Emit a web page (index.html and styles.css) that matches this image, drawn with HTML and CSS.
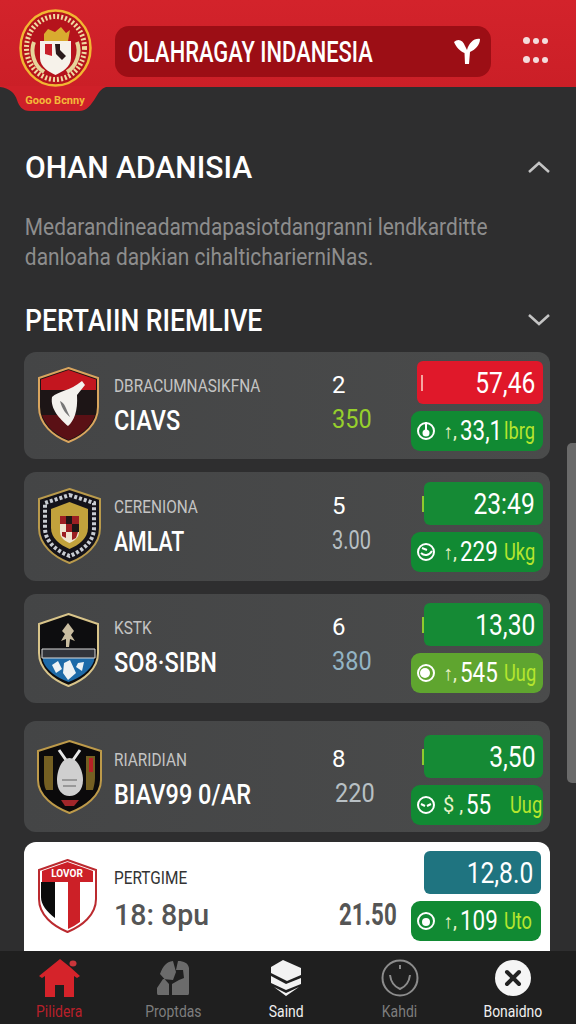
FILE: index.html
```html
<!DOCTYPE html>
<html lang="id">
<head>
    <meta charset="UTF-8">
    <meta name="viewport" content="width=device-width, initial-scale=1.0">
    <title>Olahraga Indonesia</title>
    <link rel="stylesheet" href="styles.css">
</head>
<body>
    <header class="top-bar">
        <svg class="brand" viewBox="0 0 115 112" width="115" height="112">
            <path d="M0 86H110C102 87 99 92 96 97 91 105 87 111 79 111H30C22 111 19 106 17 100 15 93 9 88 0 87Z" fill="#cf2029"/>
            <ellipse cx="55.5" cy="48" rx="35" ry="37.5" fill="#b5131c" stroke="#f2b632" stroke-width="2.5"/>
            <ellipse cx="55.5" cy="48" rx="29" ry="31.5" fill="none" stroke="#f1d9a0" stroke-width="5" stroke-dasharray="2 2"/>
            <path d="M34 42C30 52 34 66 44 72M77 42C81 52 77 66 67 72" fill="none" stroke="#e7d49a" stroke-width="4"/>
            <path d="M44 34L48 29 55 32 61 27 66 33 70 30 68 41H44Z" fill="#d9ab2f"/>
            <path d="M40 41H71V58C71 67 62 72 55.500 75 49 72 40 67 40 58Z" fill="#f6f2ea"/>
            <path d="M45 44H52V56L45 54Z" fill="#c7202a"/>
            <path d="M55 44H60V50L66 56 62 60 56 54Z" fill="#2a1a1a"/>
            <text x="55" y="104" class="brand-text" text-anchor="middle">Gooo Bcnny</text>
        </svg>
        <div class="search-pill">
            <span class="pill-title">OLAHRAGAY INDANESIA</span>
            <svg class="pill-icon" viewBox="0 0 26 27" width="26" height="27">
                <path d="M0 4C4 0 9 2 11 8L13 12C15 5 20 0 26 1 26 7 21 12 16 14L15 26H11L10.500 15C6 13 2 9 0 4Z" fill="#fff"/>
            </svg>
        </div>
        <div class="dots">
            <i class="big"></i><i></i><i></i>
            <i class="big"></i><i></i><i></i>
        </div>
    </header>

    <main class="content">
        <div class="section-head first">
            <h2 class="title-a">OHAN ADANISIA</h2>
            <svg viewBox="0 0 22 12" width="22" height="12"><path d="M1 11L11 2 21 11" class="chev"/></svg>
        </div>
        <p class="intro"><span>Medarandineadamdapasiotdangranni lendkarditte</span><span>danloaha dapkian cihalticharierniNas.</span></p>
        <div class="section-head">
            <h2 class="title-b">PERTAIIN RIEMLIVE</h2>
            <svg viewBox="0 0 22 12" width="22" height="12"><path d="M1 1L11 10 21 1" class="chev"/></svg>
        </div>

        <div class="match-list">
            <article class="card">
                <svg class="crest" viewBox="0 0 61 76" width="61" height="76">
                    <path d="M30.500 1L60 11V40C60 57 46 69 30.500 75 15 69 1 57 1 40V11Z" fill="#1d1516" stroke="#d9a55e" stroke-width="2"/>
                    <path d="M30.500 3L58 12.500V23H3V12.500Z" fill="#c3161f"/>
                    <path d="M30.500 73C18 68 8 60 4 48H57C53 60 43 68 30.500 73Z" fill="#5a1015"/>
                    <path d="M14 30C20 24 32 24 44 14L47 18 39 28C40 44 36 54 30 59 22 52 12 42 14 30Z" fill="#f4f2ee"/>
                    <path d="M22 34C24 42 28 47 32 50 28 42 27 36 22 34Z" fill="#777"/>
                </svg>
                <div class="teams">
                    <span class="league">DBRACUMNASIKFNA</span>
                    <span class="team">CIAVS</span>
                </div>
                <div class="score">
                    <span class="score-top">2</span>
                    <span class="score-sub lime">350</span>
                </div>
                <div class="odds">
                    <div class="odd-top red"><span>57,46</span></div>
                    <div class="odd-bottom">
                        <svg class="clock" viewBox="0 0 20 20" width="20" height="20"><circle cx="10" cy="10" r="8" class="ring"/><path d="M10 1V11" class="ring"/><circle cx="10" cy="12" r="3.500" fill="#fff"/></svg>
                        <span class="arrow">&#8593;,</span><span class="val">33,1</span><span class="unit">lbrg</span>
                    </div>
                </div>
            </article>

            <article class="card card-low">
                <svg class="crest" viewBox="0 0 63 76" width="63" height="76">
                    <path d="M31.500 1L62 11V40C62 57 47 69 31.500 75 16 69 1 57 1 40V11Z" fill="#14131a" stroke="#b99a4c" stroke-width="2"/>
                    <path d="M31.500 7L56 15V40C56 54 44 63 31.500 68 19 63 7 54 7 40V15Z" fill="none" stroke="#c8ccd2" stroke-width="4" stroke-dasharray="3 2"/>
                    <path d="M31.500 14L50 21V40C50 50 41 57 31.500 61 22 57 13 50 13 40V21Z" fill="#c2a23c"/>
                    <path d="M22 28H41V44C41 50 36 53 31.500 55 27 53 22 50 22 44Z" fill="#f0e6d0"/>
                    <path d="M22 28H28V36H22ZM34 28H41V36H34ZM28 36H34V44H28ZM24 44H28V50L24 48ZM34 44H40L38 50 34 52Z" fill="#9c1f22"/>
                    <path d="M28 28H34V36H28ZM34 36H41V44H34Z" fill="#1e1616"/>
                </svg>
                <div class="teams">
                    <span class="league">CERENIONA</span>
                    <span class="team tight">AMLAT</span>
                </div>
                <div class="score">
                    <span class="score-top">5</span>
                    <span class="score-sub pale tight">3.00</span>
                </div>
                <div class="odds">
                    <div class="odd-top"><span>23:49</span></div>
                    <div class="odd-bottom">
                        <svg class="clock" viewBox="0 0 20 20" width="20" height="20"><circle cx="10" cy="10" r="8" class="ring"/><path d="M5 11C8 14 13 14 16 9M6 6L11 8" class="ring"/></svg>
                        <span class="arrow">&#8593;,</span><span class="val">229</span><span class="unit">Ukg</span>
                    </div>
                </div>
            </article>

            <article class="card">
                <svg class="crest crest-low" viewBox="0 0 61 74" width="61" height="74">
                    <path d="M30.500 1L60 11V40C60 56 46 67 30.500 73 15 67 1 56 1 40V11Z" fill="#0d0d0f" stroke="#d8c48a" stroke-width="2"/>
                    <path d="M5 45H56V48C53 57 42 65 30.500 69 19 65 8 57 5 48Z" fill="#1d6aa8"/>
                    <path d="M4 36H57V45H4Z" fill="#32343a" stroke="#d8d8d8" stroke-width="1"/>
                    <path d="M30 10L36 18 33 22 37 28 32 26 31 34H28L28 26 23 28 27 21 24 18Z" fill="#c9bda0"/>
                    <path d="M14 52L20 48 24 56 18 60ZM26 50L32 47 38 60 30 67 25 60ZM40 50L46 49 44 58 38 54Z" fill="#eef2f4"/>
                </svg>
                <div class="teams">
                    <span class="league">KSTK</span>
                    <span class="team">SO8&#183;SIBN</span>
                </div>
                <div class="score">
                    <span class="score-top">6</span>
                    <span class="score-sub blue">380</span>
                </div>
                <div class="odds">
                    <div class="odd-top"><span>13,30</span></div>
                    <div class="odd-bottom light">
                        <svg class="clock" viewBox="0 0 20 20" width="20" height="20"><circle cx="10" cy="10" r="8" class="ring"/><circle cx="9" cy="10" r="5" fill="#fff"/></svg>
                        <span class="arrow">&#8593;,</span><span class="val">545</span><span class="unit">Uug</span>
                    </div>
                </div>
            </article>

            <article class="card card-tall">
                <svg class="crest crest-wide" viewBox="0 0 65 74" width="65" height="74">
                    <path d="M32.500 1L64 11V40C64 56 48 67 32.500 73 17 67 1 56 1 40V11Z" fill="#0b0a0b" stroke="#bd9a4a" stroke-width="2"/>
                    <path d="M7 16H16V50H9C7 46 7 42 7 38ZM49 16H58V38C58 42 57 46 56 50H49Z" fill="#8f7428" opacity=".8"/>
                    <path d="M52 18H56V32H52Z" fill="#b72126"/>
                    <path d="M22 10L29 20M43 10L36 20" stroke="#e8e8e8" stroke-width="3" fill="none"/>
                    <path d="M32.500 18C40 18 46 30 46 40 46 50 40 56 32.500 56 25 56 20 50 20 40 20 30 25 18 32.500 18Z" fill="#cfcfcf"/>
                    <path d="M25 40H40M26 46H39" stroke="#888" stroke-width="1.500"/>
                    <path d="M24 60H42L37 66H28Z" fill="#a0262a"/>
                </svg>
                <div class="teams">
                    <span class="league">RIARIDIAN</span>
                    <span class="team">BIAV99 0/AR</span>
                </div>
                <div class="score">
                    <span class="score-top">8</span>
                    <span class="score-sub pale inset">220</span>
                </div>
                <div class="odds">
                    <div class="odd-top"><span>3,50</span></div>
                    <div class="odd-bottom">
                        <svg class="clock" viewBox="0 0 20 20" width="20" height="20"><circle cx="10" cy="10" r="8" class="ring"/><path d="M5 9L9 11M15 9L11 11" class="ring"/></svg>
                        <span class="arrow dollar">$ ,</span><span class="val">55</span><span class="unit">Uug</span>
                    </div>
                </div>
            </article>

            <article class="card card-light">
                <svg class="crest" viewBox="0 0 59 74" width="59" height="74">
                    <path d="M29.500 1L58 11V40C58 56 44 67 29.500 73 15 67 1 56 1 40V11Z" fill="#fff" stroke="#bb2a2f" stroke-width="2"/>
                    <path d="M3 23H17V59C9 53 3 46 3 38Z" fill="#0b0b0b"/>
                    <path d="M30 23H42V63C38 66 34 68 30 70Z" fill="#cc2027"/>
                    <path d="M4 12L29.500 3 55 12V23H4Z" fill="#cc2027"/>
                    <text x="29" y="18" class="crest-text" text-anchor="middle">LOVOR</text>
                </svg>
                <div class="teams">
                    <span class="league">PERTGIME</span>
                    <span class="team">18: 8pu</span>
                </div>
                <div class="score">
                    <span class="score-only">21.50</span>
                </div>
                <div class="odds">
                    <div class="odd-top teal"><span>12,8.0</span></div>
                    <div class="odd-bottom">
                        <svg class="clock" viewBox="0 0 20 20" width="20" height="20"><circle cx="10" cy="10" r="8" class="ring"/><circle cx="10" cy="11" r="4" fill="#fff"/></svg>
                        <span class="arrow">&#8593;,</span><span class="val">109</span><span class="unit">Uto</span>
                    </div>
                </div>
            </article>
        </div>
        <div class="scroll-thumb"></div>
    </main>

    <nav class="bottom-nav">
        <a class="nav-item active">
            <svg viewBox="0 0 42 38" width="42" height="38">
                <path d="M0 17L21 0 31 8 41 17 38 19 35 17V38H25V26H16V38H6V17L3 19Z" fill="#d5232a"/>
                <ellipse cx="34" cy="4.500" rx="3.500" ry="3" fill="#c9363b"/>
            </svg>
            <span>Pilidera</span>
        </a>
        <a class="nav-item">
            <svg viewBox="0 0 34 36" width="34" height="36">
                <path d="M4 14C7 6 10 2 17 1L20 12 17 20 7 19 1 28V33C1 35 2 35 3 35H13V24ZM22 1C28 1 32 3 33 8V33C33 35 32 35 31 35H16V24L23 20 28 18 27 10H20Z" fill="#6b6b6b"/>
            </svg>
            <span>Proptdas</span>
        </a>
        <a class="nav-item bright">
            <svg viewBox="0 0 32 36" width="32" height="36">
                <path d="M13 0L31 8V15L17 21 1 13V7Z" fill="#f2f2f2"/>
                <path d="M1 16L16 24 31 18V24L16 30 1 23Z" fill="#f2f2f2"/>
                <path d="M4 27L16 33 29 27 16 36Z" fill="#f2f2f2"/>
            </svg>
            <span>Saind</span>
        </a>
        <a class="nav-item">
            <svg viewBox="0 0 38 38" width="38" height="38">
                <circle cx="19" cy="19" r="17.500" fill="none" stroke="#8c8c8c" stroke-width="2"/>
                <path d="M9 16C10 24 14 28 19 30 24 28 28 24 29 16M19 6V10" fill="none" stroke="#8c8c8c" stroke-width="2"/>
            </svg>
            <span>Kahdi</span>
        </a>
        <a class="nav-item bright">
            <svg viewBox="0 0 36 36" width="36" height="36">
                <circle cx="18" cy="18" r="18" fill="#f5f5f5"/>
                <path d="M12 12L24 24M24 12L12 24" stroke="#222" stroke-width="4" stroke-linecap="round"/>
            </svg>
            <span>Bonaidno</span>
        </a>
    </nav>
</body>
</html>
```

FILE: styles.css
```css
* {
    margin: 0;
    padding: 0;
    box-sizing: border-box;
}

body {
    width: 576px;
    height: 1024px;
    overflow: hidden;
    font-family: Roboto, sans-serif;
    background: #2e2e2f;
    color: white;
    display: flex;
    flex-direction: column;
}

/* top bar */
.top-bar {
    height: 87px;
    flex-shrink: 0;
    display: flex;
    align-items: flex-start;
    background: linear-gradient(to bottom, #d3232b, #cb1f27);
    position: relative;
    z-index: 2;
}

.brand {
    flex-shrink: 0;
}

.brand-text {
    font-size: 11px;
    font-weight: 700;
    fill: #f4b93a;
}

.search-pill {
    width: 376px;
    height: 51px;
    margin-top: 26px;
    padding: 0 11px 0 13px;
    display: flex;
    align-items: center;
    justify-content: space-between;
    background: #9c0e15;
    border-radius: 14px;
}

.pill-title {
    display: inline-block;
    font-size: 29px;
    font-weight: 500;
    white-space: nowrap;
    transform: scaleX(0.755);
    transform-origin: left;
}

.dots {
    width: 28px;
    margin: 37px 0 0 31px;
    display: grid;
    grid-template-columns: repeat(3, 1fr);
    row-gap: 12px;
    justify-items: center;
    align-items: center;
}

.dots i {
    width: 6px;
    height: 6px;
    background: #f4dcdc;
    border-radius: 50%;
}

.dots i.big {
    width: 7px;
    height: 7px;
}

/* content */
.content {
    height: 864px;
    flex-shrink: 0;
    padding: 0 26px 0 24px;
    overflow: hidden;
    position: relative;
}

.section-head {
    display: flex;
    justify-content: space-between;
    align-items: center;
    padding-left: 1px;
}

.section-head.first {
    margin-top: 62px;
}

.section-head h2 {
    font-size: 32px;
    line-height: 36px;
    font-weight: 500;
    white-space: nowrap;
    transform-origin: left;
}

.title-a {
    transform: scaleX(0.94);
}

.title-b {
    transform: scaleX(0.83);
}

.chev {
    fill: none;
    stroke: #c4c4c4;
    stroke-width: 2.5;
}

.intro {
    margin-top: 27px;
    padding-left: 1px;
    font-size: 24px;
    line-height: 30px;
    color: #8d8d8d;
    white-space: nowrap;
    transform: scaleX(0.87);
    transform-origin: left;
}

.intro span {
    display: block;
}

.intro + .section-head {
    margin-top: 30px;
}

.match-list {
    margin-top: 14px;
    display: flex;
    flex-direction: column;
    gap: 13px;
}

.card {
    height: 109px;
    padding: 9px 7px 0 14px;
    display: grid;
    grid-template-columns: 61px 233px minmax(0, 1fr) auto;
    align-items: start;
    background: linear-gradient(to right, #444546, #4a4b4b);
    border-radius: 12px;
}

.card:first-child {
    height: 107px;
}

.card-low {
    padding-top: 10px;
}

.card-tall {
    height: 111px;
    margin-top: 5px;
    padding-top: 14px;
}

.crest {
    margin-top: 6px;
}

.crest-low {
    margin-top: 10px;
}

.crest-wide {
    margin-left: -1px;
    margin-top: 5px;
}

.teams {
    padding: 13px 0 0 15px;
    display: flex;
    flex-direction: column;
    white-space: nowrap;
}

.league {
    font-size: 19px;
    line-height: 24px;
    color: #c4c4c4;
    transform: scaleX(0.81);
    transform-origin: left;
}

.team {
    margin-top: 7px;
    font-size: 28px;
    line-height: 32px;
    font-weight: 500;
    color: #fff;
    transform: scaleX(0.84);
    transform-origin: left;
}

.team.tight {
    transform: scaleX(0.76);
}

.score {
    padding-top: 11px;
    display: flex;
    flex-direction: column;
}

.score-top {
    font-size: 24px;
    line-height: 26px;
}

.score-sub {
    margin-top: 7px;
    font-size: 25px;
    line-height: 30px;
    transform: scaleX(0.94);
    transform-origin: left;
}

.score-sub.tight {
    transform: scaleX(0.8);
}

.score-sub.inset {
    margin-left: 3px;
}

.lime { color: #96cf2c; }
.pale { color: #b8c0c4; }
.blue { color: #93b4c4; }

.odds {
    width: 132px;
    display: flex;
    flex-direction: column;
    align-items: flex-end;
    gap: 7px;
}

.odd-top {
    width: 119px;
    height: 43px;
    padding-right: 8px;
    text-align: right;
    font-size: 30px;
    line-height: 43px;
    background: #158a35;
    border-radius: 6px;
    position: relative;
}

.odd-top span {
    display: inline-block;
    transform: scaleX(0.82);
    transform-origin: right;
}

.odd-top::before {
    content: "";
    position: absolute;
    left: -2px;
    top: 14px;
    width: 2px;
    height: 16px;
    background: #8fc92e;
}

.odd-top.red {
    width: 126px;
    background: #e0182a;
}

.odd-top.red::before {
    left: 4px;
    background: #f5a6a0;
}

.odd-top.teal {
    width: 117px;
    margin-right: 2px;
    background: #1f7480;
}

.odd-top.teal::before {
    display: none;
}

.odd-bottom {
    width: 132px;
    height: 40px;
    padding: 0 7px 0 5px;
    display: flex;
    align-items: center;
    line-height: 40px;
    white-space: nowrap;
    background: #118a33;
    border-radius: 9px;
}

.card-light .odd-bottom {
    width: 130px;
    margin-right: 2px;
}

.odd-bottom.light {
    background: #5fa52f;
}

.clock {
    flex-shrink: 0;
    margin-right: 7px;
}

.ring {
    fill: none;
    stroke: #fff;
    stroke-width: 2;
}

.arrow {
    font-size: 20px;
    color: #e8f2c8;
    margin-right: 3px;
}

.val {
    width: 44px;
    flex-shrink: 0;
    font-size: 28px;
    transform: scaleX(0.8);
    transform-origin: left;
}

.unit {
    font-size: 24px;
    color: #b5e52e;
    transform: scaleX(0.76);
    transform-origin: left;
}

.card-light {
    height: 109px;
    margin-top: -3px;
    background: #fff;
    border-radius: 12px 12px 0 0;
}

.card-light .crest {
    margin-top: 8px;
}

.card-light .teams {
    padding-top: 15px;
}

.card-light .league {
    color: #333;
}

.card-light .team {
    margin-top: 9px;
    color: #555;
    font-size: 30px;
    transform: scaleX(0.95);
}

.card-light .score-only {
    display: block;
    margin: 35px 0 0 7px;
    font-size: 31px;
    line-height: 36px;
    font-weight: 700;
    color: #555;
    white-space: nowrap;
    transform: scaleX(0.72);
    transform-origin: left;
}

.crest-text {
    font-size: 10px;
    font-weight: 700;
    fill: #fff;
}

.scroll-thumb {
    position: absolute;
    left: 567px;
    top: 356px;
    width: 9px;
    height: 340px;
    background: #6a6a6a;
    border-radius: 5px 0 0 5px;
}

/* bottom nav */
.bottom-nav {
    flex: 1;
    padding: 8px 6px 0 3px;
    display: grid;
    grid-template-columns: repeat(5, 1fr);
    background: #1f1f1f;
}

.nav-item {
    display: flex;
    flex-direction: column;
    align-items: center;
    gap: 3px;
    color: #7d7d7d;
    font-size: 17px;
    line-height: 22px;
}

.nav-item span {
    white-space: nowrap;
    transform: scaleX(0.82);
}

.nav-item svg {
    height: 38px;
}

.nav-item.active {
    color: #b8202a;
}

.nav-item.bright {
    color: #f0f0f0;
}
```
